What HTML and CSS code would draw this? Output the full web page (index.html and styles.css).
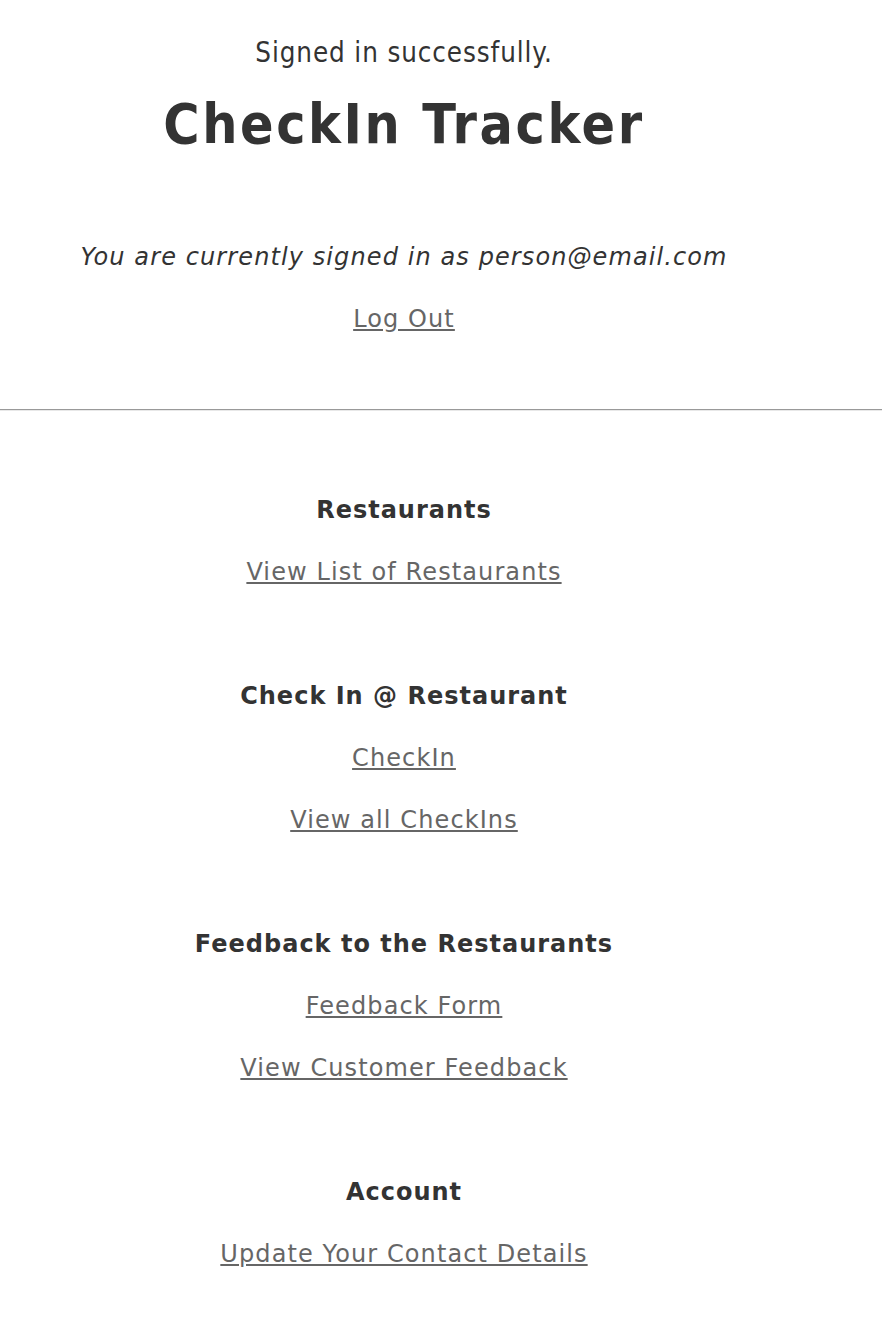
FILE: index.html
```html
<!DOCTYPE html>
<html>
<head>
<meta charset="utf-8">
<link rel="stylesheet" href="styles.css">
</head>
<body>
<div class="page">
  <header class="top">
    <p class="flash">Signed in successfully.</p>
    <h1 class="title">CheckIn Tracker</h1>
    <p class="signed">You are currently signed in as person@email.com</p>
    <p class="line"><a href="#">Log Out</a></p>
  </header>
</div>
<hr class="rule">
<div class="page">
  <main class="menu">
    <section class="group">
      <h3 class="line head">Restaurants</h3>
      <p class="line"><a href="#">View List of Restaurants</a></p>
    </section>
    <section class="group">
      <h3 class="line head">Check In @ Restaurant</h3>
      <p class="line"><a href="#">CheckIn</a></p>
      <p class="line"><a href="#">View all CheckIns</a></p>
    </section>
    <section class="group">
      <h3 class="line head">Feedback to the Restaurants</h3>
      <p class="line"><a href="#">Feedback Form</a></p>
      <p class="line"><a href="#">View Customer Feedback</a></p>
    </section>
    <section class="group">
      <h3 class="line head">Account</h3>
      <p class="line"><a href="#">Update Your Contact Details</a></p>
    </section>
  </main>
</div>
</body>
</html>
```
FILE: styles.css
```css
html, body {
  margin: 0;
  padding: 0;
  background: #fff;
}
body {
  font-family: "DejaVu Sans", Verdana, sans-serif;
  color: #333;
  font-size: 24px;
}
.page {
  width: 808px;
  text-align: center;
}
p, h1, h3 { margin: 0; }
.top {
  display: flex;
  flex-direction: column;
  padding-top: 32px;
}
.flash {
  font-family: "DejaVu Sans Condensed", "DejaVu Sans", sans-serif;
  font-size: 27.5px;
  letter-spacing: 0.9px;
  line-height: 40px;
}
.title {
  font-family: "DejaVu Sans Condensed", "DejaVu Sans", sans-serif;
  font-weight: bold;
  font-size: 55px;
  letter-spacing: 2.6px;
  line-height: 104px;
  margin-bottom: 50px;
}
.signed {
  font-style: italic;
  letter-spacing: 1.1px;
  line-height: 62px;
}
.line {
  line-height: 62px;
  font-size: 24px;
  letter-spacing: 1.1px;
}
.head {
  font-weight: bold;
  letter-spacing: 1px;
}
a {
  color: #666;
  text-decoration: underline;
}
.rule {
  margin: 59px 0 0;
  border: 0;
  border-top: 1px solid #999;
  border-bottom: 1px solid #e8e8e8;
  height: 0;
}
.menu {
  display: flex;
  flex-direction: column;
  gap: 62px;
  padding-top: 68px;
  padding-bottom: 60px;
}
```
